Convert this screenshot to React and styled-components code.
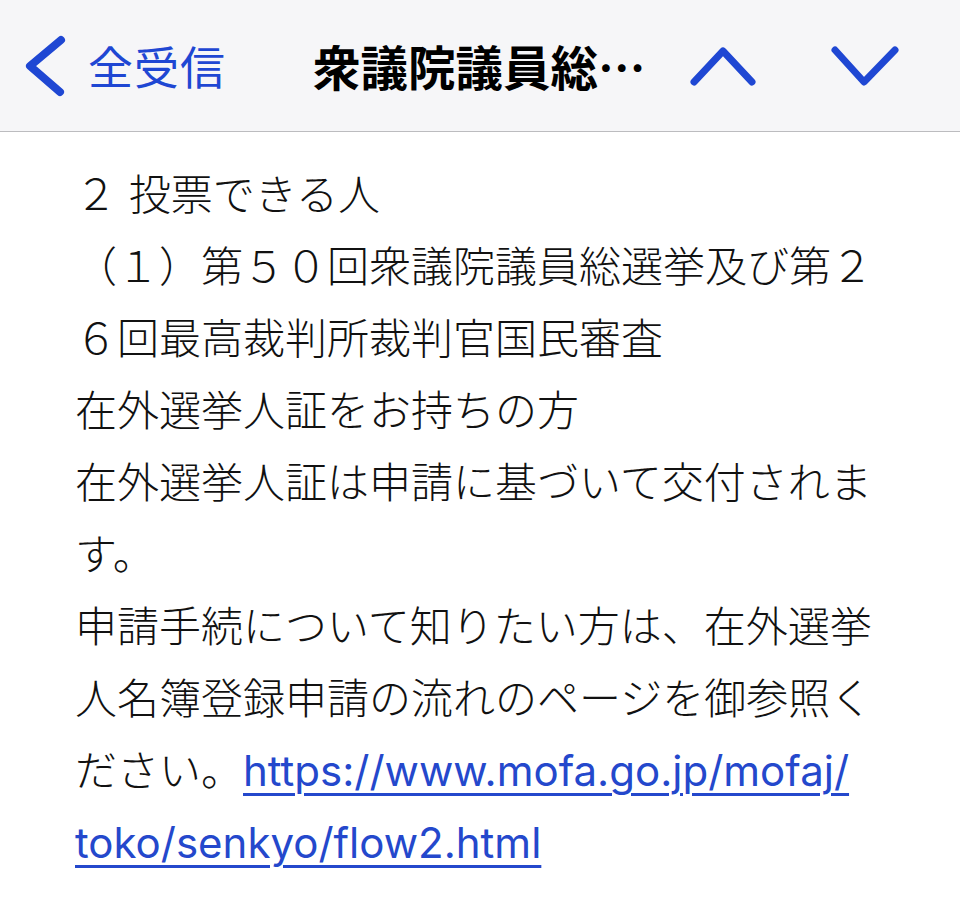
import React from 'react';
import styled, { createGlobalStyle } from 'styled-components';

const GlobalStyle = createGlobalStyle`
  html, body {
    margin: 0;
    padding: 0;
    background: #ffffff;
  }
  body {
    font-family: "Noto Sans CJK JP", sans-serif;
  }
`;

const Page = styled.div`
  width: 960px;
  min-height: 923px;
  background: #ffffff;
`;

const Header = styled.header`
  display: flex;
  align-items: center;
  height: 131px;
  background: #f6f6f8;
  border-bottom: 1px solid #bcbcbf;
  box-sizing: content-box;
`;

const BackButton = styled.div`
  display: flex;
  align-items: center;
  margin-left: 21px;
  color: #1f47d3;
`;

const BackLabel = styled.span`
  margin-left: 19px;
  font-family: "Noto Sans CJK JP", sans-serif;
  font-size: 45px;
  font-weight: 400;
  letter-spacing: 1px;
`;

const Title = styled.h1`
  margin: 0 0 0 87px;
  width: 368px;
  font-family: "Noto Sans CJK JP", sans-serif;
  font-size: 47.5px;
  font-weight: 700;
  color: #000000;
  white-space: nowrap;
`;

const NavGroup = styled.div`
  display: flex;
  align-items: center;
  gap: 64px;
  color: #1f47d3;
`;

const Body = styled.main`
  padding: 27px 0 0 75px;
  font-family: "Inter", "Noto Sans CJK JP", sans-serif;
  font-size: 42px;
  font-weight: 300;
  line-height: 72px;
  color: #111111;
`;

const Line = styled.div`
  white-space: nowrap;
`;

const Link = styled.a`
  color: #2448cc;
  font-weight: 400;
  text-decoration: underline;
  text-decoration-thickness: 2.5px;
  text-underline-offset: 7px;
`;

const Chevron = ({ points, width, height, stroke = 7 }) => (
  <svg width={width} height={height} viewBox={`0 0 ${width} ${height}`} fill="none">
    <polyline
      points={points}
      stroke="currentColor"
      strokeWidth={stroke}
      strokeLinecap="round"
      strokeLinejoin="round"
    />
  </svg>
);

export default function App() {
  return (
    <Page>
      <GlobalStyle />
      <Header>
        <BackButton>
          <Chevron width={48} height={70} stroke={8} points="40,9 9,35 39,61" />
          <BackLabel>全受信</BackLabel>
        </BackButton>
        <Title>衆議院議員総…</Title>
        <NavGroup>
          <Chevron width={80} height={50} points="13,41 42,10 71,41" />
          <Chevron width={80} height={50} points="10,9 39,41 70,9" />
        </NavGroup>
      </Header>
      <Body>
        <Line>２ 投票できる人</Line>
        <Line>（１）第５０回衆議院議員総選挙及び第２</Line>
        <Line>６回最高裁判所裁判官国民審査</Line>
        <Line>在外選挙人証をお持ちの方</Line>
        <Line>在外選挙人証は申請に基づいて交付されま</Line>
        <Line>す。</Line>
        <Line>申請手続について知りたい方は、在外選挙</Line>
        <Line>人名簿登録申請の流れのページを御参照く</Line>
        <Line>
          ださい。<Link href="#">https://www.mofa.go.jp/mofaj/</Link>
        </Line>
        <Line>
          <Link href="#">toko/senkyo/flow2.html</Link>
        </Line>
      </Body>
    </Page>
  );
}
